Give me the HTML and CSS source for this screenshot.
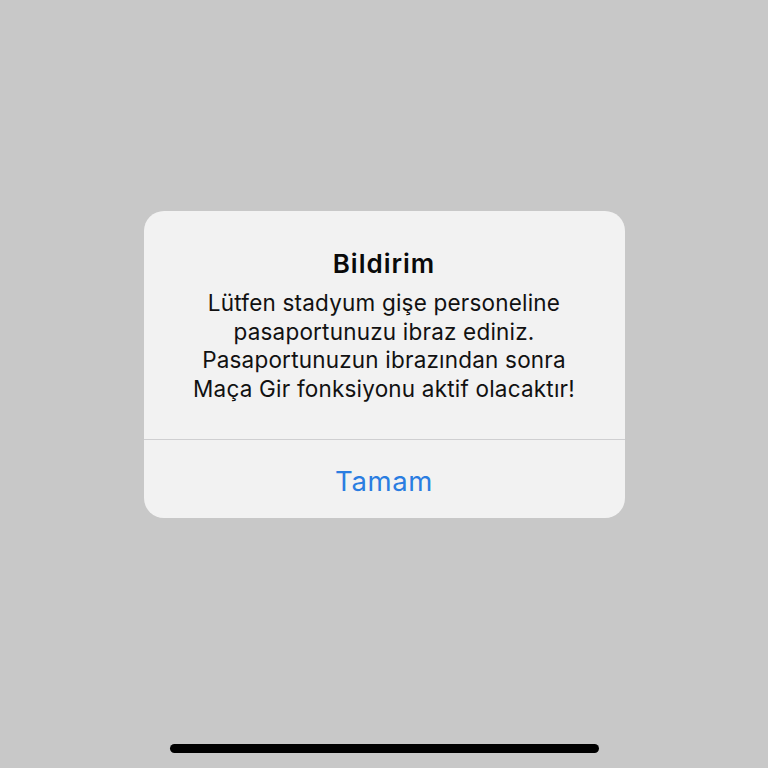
FILE: index.html
```html
<!DOCTYPE html>
<html lang="tr">
<head>
<meta charset="utf-8">
<link rel="stylesheet" href="styles.css">
</head>
<body>
<div class="screen">
  <div class="alert">
    <div class="content">
      <div class="title">Bildirim</div>
      <div class="message">Lütfen stadyum gişe personeline<br>pasaportunuzu ibraz ediniz.<br>Pasaportunuzun ibrazından sonra<br>Maça Gir fonksiyonu aktif olacaktır!</div>
    </div>
    <div class="button">Tamam</div>
  </div>
  <div class="home-indicator"></div>
</div>
</body>
</html>
```
FILE: styles.css
```css
html, body {
  margin: 0;
  padding: 0;
}
body {
  background: #c8c8c8;
  font-family: Inter, "Noto Sans", "Liberation Sans", sans-serif;
}
.screen {
  width: 768px;
  height: 768px;
  display: flex;
  flex-direction: column;
  align-items: center;
  overflow: hidden;
}
.alert {
  margin-top: 211px;
  width: 481px;
  height: 307px;
  background: #f2f2f2;
  border-radius: 20px;
  display: flex;
  flex-direction: column;
  box-sizing: border-box;
}
.content {
  padding: 38px 10px 0;
  height: 229px;
  box-sizing: border-box;
  border-bottom: 1px solid #cfcfd1;
  text-align: center;
}
.title {
  font-size: 26px;
  font-weight: 600;
  line-height: 30px;
  letter-spacing: 1px;
  color: #0a0a0a;
}
.message {
  margin-top: 10px;
  font-size: 22.5px;
  line-height: 28.6px;
  letter-spacing: 0.2px;
  color: #111;
}
.button {
  flex: 1;
  display: flex;
  align-items: center;
  justify-content: center;
  padding-top: 3px;
  font-size: 27.5px;
  letter-spacing: 0.6px;
  color: #2a7de1;
}
.home-indicator {
  margin-top: 226px;
  width: 429px;
  height: 9px;
  border-radius: 5px;
  background: #000;
}
```
